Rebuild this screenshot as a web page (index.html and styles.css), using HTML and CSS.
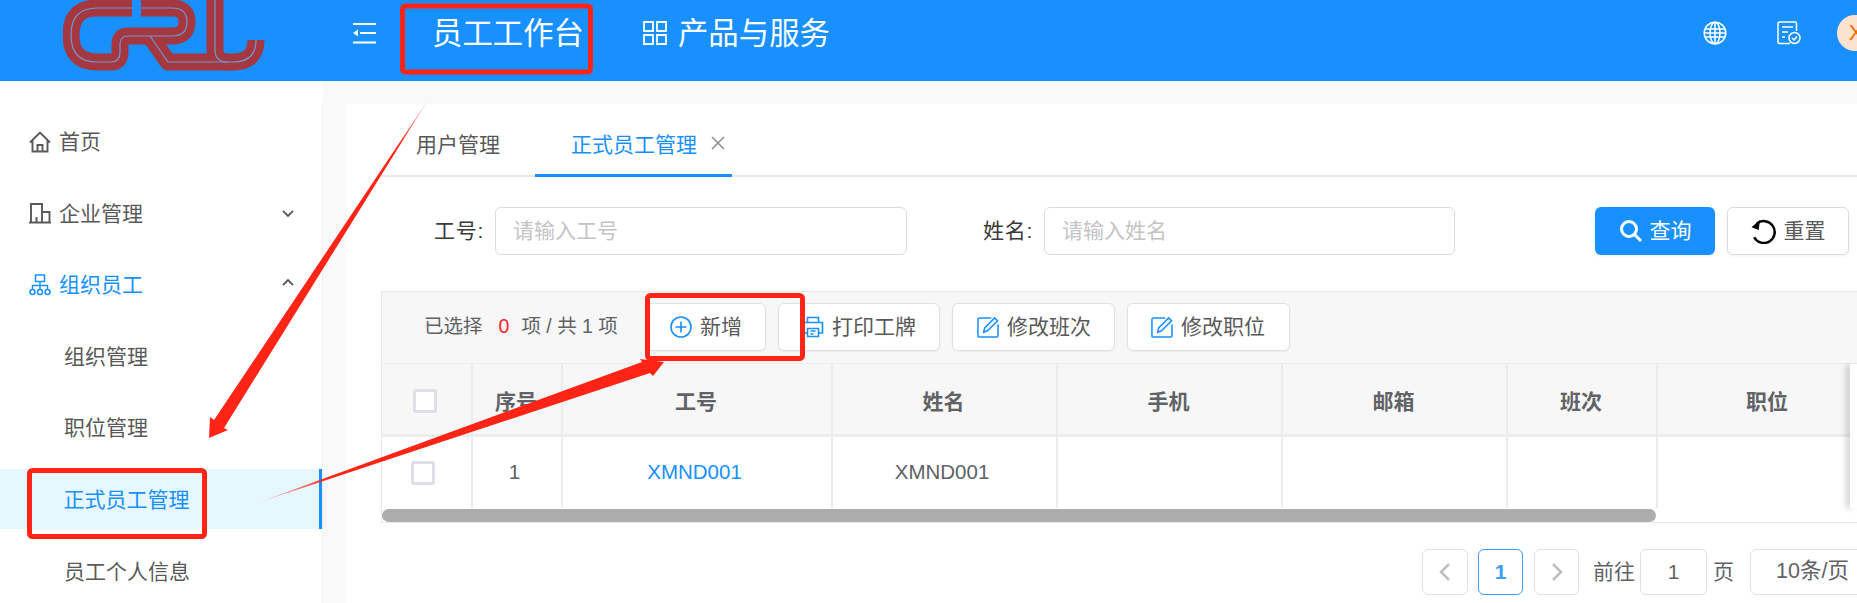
FILE: index.html
```html
<!DOCTYPE html>
<html lang="zh-CN">
<head>
<meta charset="utf-8">
<title>正式员工管理</title>
<link rel="stylesheet" href="styles.css">
</head>
<body>
<header class="topbar">
  <svg class="logo" viewBox="0 0 202 71" aria-hidden="true">
    <g class="logo-band">
      <path d="M69 8H34Q8 8 8 35Q8 62 34 62H48Q57 62 57 52V44Q57 36 65 36H109Q124 36 124 22Q124 8 109 8H78"/>
      <path d="M87 36L105 62H170Q193 62 193 40"/>
      <path d="M152 -4V50Q152 62 165 62"/>
    </g>
    <g class="logo-line">
      <path d="M69 8H34Q8 8 8 35Q8 62 34 62H48Q57 62 57 52V44Q57 36 65 36H109Q124 36 124 22Q124 8 109 8H78"/>
      <path d="M87 36L105 62H170Q193 62 193 40"/>
      <path d="M152 -4V50Q152 62 165 62"/>
    </g>
  </svg>
  <svg class="ico-menu" viewBox="0 0 23 22" aria-hidden="true">
    <path d="M0 1h23v2H0zM7 10h16v2H7zM0 19.500h23v2H0zM0 11l5-3.500v7z"/>
  </svg>
  <span class="top-title">员工工作台</span>
  <svg class="ico-grid" viewBox="0 0 24 24" aria-hidden="true">
    <path d="M1 1h9v9H1zM14 1h9v9h-9zM1 14h9v9H1zM14 14h9v9h-9z"/>
  </svg>
  <span class="top-title top-title-b">产品与服务</span>
  <div class="top-right">
    <svg class="ico-top" viewBox="0 0 24 24" aria-hidden="true">
      <circle cx="12" cy="12" r="10.800"/>
      <ellipse cx="12" cy="12" rx="5" ry="10.800"/>
      <path d="M12 1v22M2 8h20M2 16h20M1 12h22"/>
    </svg>
    <svg class="ico-top" viewBox="0 0 24 24" aria-hidden="true">
      <path d="M13 22.500H2.500Q1 22.500 1 21V2.500Q1 1 2.500 1H18Q19.500 1 19.500 2.500V10"/>
      <path d="M5 6h11M5 11h6M5 16h3"/>
      <circle cx="17.500" cy="17" r="5.500"/>
      <path d="M15 17l2 2 3-3.500"/>
    </svg>
    <div class="avatar">X</div>
  </div>
</header>

<div class="body-row">
  <nav class="sidebar">
    <a class="nav-item">
      <svg class="nav-ico" viewBox="0 0 22 22" aria-hidden="true"><path d="M1 11.500L11 1.500l10 10M3.500 9.500V20.500h15V9.500M8.500 20.500V14h5v6.500"/></svg>
      <span>首页</span>
    </a>
    <a class="nav-item">
      <svg class="nav-ico" viewBox="0 0 22 22" aria-hidden="true"><path d="M0 20.500h22M2 20.500V2h11v18.500M13 10h7.500v10.500M7.500 20.500V15"/></svg>
      <span>企业管理</span>
      <svg class="chev" viewBox="0 0 12 7" aria-hidden="true"><path d="M1 1l5 5 5-5"/></svg>
    </a>
    <a class="nav-item nav-open">
      <svg class="nav-ico" viewBox="0 0 22 22" aria-hidden="true"><path d="M6.500 1h9v6.500h-9zM11 7.500V15M3.500 15v-3.500h15V15"/><circle cx="3.500" cy="18" r="2.500"/><circle cx="11" cy="18" r="2.500"/><circle cx="18.500" cy="18" r="2.500"/></svg>
      <span>组织员工</span>
      <svg class="chev chev-up" viewBox="0 0 12 7" aria-hidden="true"><path d="M1 6l5-5 5 5"/></svg>
    </a>
    <a class="nav-item nav-sub">组织管理</a>
    <a class="nav-item nav-sub">职位管理</a>
    <a class="nav-item nav-sub nav-active">正式员工管理</a>
    <a class="nav-item nav-sub nav-last">员工个人信息</a>
  </nav>

  <main class="stage">
    <section class="card">
      <div class="tabs">
        <div class="tab">用户管理</div>
        <div class="tab tab-active">正式员工管理<svg class="tab-x" viewBox="0 0 14 14" aria-hidden="true"><path d="M1 1l12 12M13 1L1 13"/></svg></div>
      </div>

      <form class="filter">
        <label class="f-label">工号:</label>
        <div class="f-input f-input-a">请输入工号</div>
        <label class="f-label f-label-b">姓名:</label>
        <div class="f-input f-input-b">请输入姓名</div>
        <button type="button" class="btn-primary">
          <svg class="ico-search" viewBox="0 0 24 24" aria-hidden="true"><circle cx="10" cy="10" r="7.500"/><path d="M15.500 15.500L22 22"/></svg>查询
        </button>
        <button type="button" class="btn-reset">
          <svg class="ico-reset" viewBox="0 0 24 24" aria-hidden="true"><path class="reset-arc" d="M5.500 4.500A10.500 10.500 0 1 1 3 17.500"/><path class="reset-head" d="M8.500 1L7.500 10.500 0.500 8z"/></svg>重置
        </button>
      </form>

      <div class="toolbar">
        <span class="tb-count">已选择<b class="tb-zero">0</b>项 / 共 1 项</span>
        <button type="button" class="tb-btn tb-add">
          <svg class="tb-ico" viewBox="0 0 22 22" aria-hidden="true"><circle cx="11" cy="11" r="10"/><path d="M11 5.500v11M5.500 11h11"/></svg>新增
        </button>
        <button type="button" class="tb-btn tb-print">
          <svg class="tb-ico" viewBox="0 0 22 22" aria-hidden="true"><path d="M5.500 6.500V1.500h11v5M5.500 17H1.500V6.500h19V17h-4"/><path d="M5.500 12.500h11v8h-11zM8.500 15h5M8.500 18h3"/></svg>打印工牌
        </button>
        <button type="button" class="tb-btn tb-edit-a">
          <svg class="tb-ico" viewBox="0 0 23 23" aria-hidden="true"><path d="M15 2H2.500Q1 2 1 3.500v18Q1 22 2.500 22h18q1.500 0 1.500-1.500V9"/><path d="M7 17l1-4.500L18.500 2l3 3L11 15.500z"/></svg>修改班次
        </button>
        <button type="button" class="tb-btn tb-edit-b">
          <svg class="tb-ico" viewBox="0 0 23 23" aria-hidden="true"><path d="M15 2H2.500Q1 2 1 3.500v18Q1 22 2.500 22h18q1.500 0 1.500-1.500V9"/><path d="M7 17l1-4.500L18.500 2l3 3L11 15.500z"/></svg>修改职位
        </button>
      </div>

      <div class="table-wrap">
        <table class="grid">
          <colgroup>
            <col class="c-check"><col class="c-no"><col class="c-id"><col class="c-m"><col class="c-m"><col class="c-m"><col class="c-shift"><col class="c-pos">
          </colgroup>
          <thead>
            <tr>
              <th><span class="check check-head"></span></th>
              <th>序号</th><th>工号</th><th>姓名</th><th>手机</th><th>邮箱</th><th>班次</th><th>职位</th>
            </tr>
          </thead>
          <tbody>
            <tr>
              <td><span class="check check-row"></span></td>
              <td>1</td><td class="cell-link">XMND001</td><td>XMND001</td><td></td><td></td><td></td><td></td>
            </tr>
          </tbody>
        </table>
        <div class="scroll-track"><div class="scroll-thumb"></div></div>
        <div class="fixed-edge"></div>
      </div>

      <div class="pager">
        <span class="pg-box pg-prev"><svg class="pg-chev" viewBox="0 0 12 20" aria-hidden="true"><path d="M10 2L2 10l8 8"/></svg></span>
        <span class="pg-box pg-cur">1</span>
        <span class="pg-box pg-next"><svg class="pg-chev" viewBox="0 0 12 20" aria-hidden="true"><path d="M2 2l8 8-8 8"/></svg></span>
        <span class="pg-text pg-goto">前往</span>
        <span class="pg-box pg-input">1</span>
        <span class="pg-text pg-unit">页</span>
        <span class="pg-box pg-size">10条/页</span>
      </div>
    </section>
  </main>
</div>

<svg class="annot" viewBox="0 0 1857 603" aria-hidden="true">
  <defs>
    <linearGradient id="fade-a" gradientUnits="userSpaceOnUse" x1="428" y1="100" x2="400" y2="144">
      <stop offset="0" stop-color="#ff2416" stop-opacity=".3"/>
      <stop offset="1" stop-color="#ff2416"/>
    </linearGradient>
    <linearGradient id="fade-b" gradientUnits="userSpaceOnUse" x1="257" y1="503" x2="330" y2="478">
      <stop offset="0" stop-color="#ff2416" stop-opacity=".1"/>
      <stop offset="1" stop-color="#ff2416"/>
    </linearGradient>
  </defs>
  <rect class="mark" x="402.500" y="6" width="188" height="66" rx="3"/>
  <rect class="mark" x="647.500" y="295.500" width="155" height="63" rx="3"/>
  <rect class="mark" x="29.500" y="470.500" width="175" height="66" rx="3"/>
  <polygon fill="url(#fade-a)" points="428,100 224,428 228,430 209,438 210,417 214,420"/>
  <polygon fill="url(#fade-b)" points="257,503 650,373 653,376 664,362 640,359 642,362"/>
</svg>
</body>
</html>
```
FILE: styles.css
```css
* { box-sizing: border-box; }
html, body { margin: 0; height: 100%; overflow: hidden; }
body {
  position: relative;
  width: 1857px;
  height: 603px;
  background: #fff;
  color: #595959;
  font-family: "Liberation Sans", "Noto Sans CJK SC", sans-serif;
  font-size: 21px;
  line-height: 1.2;
}
button { font: inherit; margin: 0; cursor: pointer; }

/* top bar */
.topbar {
  height: 81px;
  padding-bottom: 15px;
  background: #1890ff;
  color: #fff;
  display: flex;
  align-items: center;
}
.logo { width: 202px; height: 71px; margin-left: 63px; align-self: flex-start; flex: none; }
.logo-band path { fill: none; stroke: #a4373f; stroke-width: 17; stroke-linejoin: round; }
.logo-line path { fill: none; stroke: #6f9bd0; stroke-width: 1.200; stroke-linejoin: round; }
.ico-menu { width: 23px; height: 22px; margin-left: 88px; fill: #fff; flex: none; }
.top-title { font-size: 30.400px; margin-left: 56px; line-height: 40px; white-space: nowrap; }
.top-title-b { margin-left: 11px; }
.ico-grid { width: 24px; height: 24px; margin-left: 59px; fill: none; stroke: #fff; stroke-width: 1.800; flex: none; }
.top-right { margin-left: auto; display: flex; align-items: center; gap: 50px; margin-right: -16px; }
.ico-top { width: 24px; height: 24px; fill: none; stroke: #fff; stroke-width: 1.500; flex: none; }
.avatar {
  width: 36px; height: 36px; border-radius: 50%;
  background: #fde3cf; color: #f56a00;
  display: flex; align-items: center; justify-content: center;
  font-size: 22px; margin-left: -14px; padding-left: 2px;
}

/* layout below the bar */
.body-row { display: flex; height: 522px; }
.sidebar {
  width: 323px; flex: none;
  padding-top: 30px;
  background: #fff;
  border-right: 1px solid #efefef;
  border-image: linear-gradient(to bottom, #fff 23px, #efefef 23px) 1;
  overflow: hidden;
}
.nav-item {
  height: 60px;
  margin-bottom: 11.600px;
  padding: 1px 28px 0 29px;
  display: flex;
  align-items: center;
  white-space: nowrap;
}
.nav-ico { width: 22px; height: 22px; margin-right: 8px; fill: none; stroke: #595959; stroke-width: 1.900; flex: none; }
.chev { width: 12px; height: 7px; margin-left: auto; fill: none; stroke: #595959; stroke-width: 1.800; }
.chev-up { margin-top: -4px; }
.nav-open { color: #1890ff; }
.nav-open .nav-ico { stroke: #1890ff; stroke-width: 1.500; fill: none; }
.nav-sub { padding-left: 64px; }
.nav-active { color: #1890ff; background: #e6f7ff; box-shadow: inset -3px 0 0 #1890ff; padding: 2px 28px 0 63.500px; }
.nav-last { padding-top: 2px; }

.stage { flex: 1; min-width: 0; background: #f9f9f9; padding: 23px 0 0 23px; }
.card { height: 100%; background: #fff; padding: 0 0 0 35px; overflow: hidden; }

/* tabs */
.tabs { height: 73px; display: flex; border-bottom: 2px solid #e8e8e8; }
.tab {
  padding: 27px 36px 0 35px; height: 73px; line-height: 28px; white-space: nowrap; color: #595959;
}
.tab-active { color: #1890ff; border-bottom: 3px solid #1890ff; display: flex; align-items: flex-start; padding: 27px 7px 0 36px; margin-left: -1px; }
.tab-x { width: 14px; height: 14px; margin: 5px 0 0 14px; fill: none; stroke: #8c8c8c; stroke-width: 1.500; }

/* filter */
.filter { display: flex; align-items: center; margin-top: 30px; height: 48px; }
.f-label { margin-left: 53px; width: 48px; color: #3a3a3a; white-space: nowrap; letter-spacing: .7px; }
.f-label-b { margin-left: 76px; width: 50px; }
.f-input {
  height: 48px; border: 1.500px solid #dcdcdc; border-radius: 6px;
  padding-left: 17px; line-height: 45px; color: #c4c4c4; margin-left: 13px; flex: none;
}
.f-input-a { width: 412px; }
.f-input-b { width: 411px; margin-left: 11px; }
.btn-primary, .btn-reset {
  height: 48px; border-radius: 6px; display: flex; align-items: center; justify-content: center; padding: 0; flex: none;
}
.btn-primary {
  width: 120px; margin-left: 140px; background: #1890ff; color: #fff; border: 0;
  box-shadow: 0 2px 2px rgba(0,0,0,.05);
}
.btn-reset {
  width: 122px; margin-left: 12px; background: #fff; color: #595959; border: 1.500px solid #d9d9d9;
  box-shadow: 0 2px 2px rgba(0,0,0,.03);
}
.ico-search { width: 24px; height: 24px; margin-right: 7px; fill: none; stroke: #fff; stroke-width: 3; }
.ico-reset { width: 25px; height: 25px; margin-right: 8px; }
.reset-arc { fill: none; stroke: #000; stroke-width: 2.400; }
.reset-head { fill: #000; }

/* toolbar */
.toolbar {
  height: 72px; margin-top: 36px;
  background: #f7f7f7;
  border-top: 1px solid #e8e8e8;
  border-left: 1px solid #e8e8e8;
  display: flex; align-items: center;
  padding-bottom: 2px;
}
.tb-count { font-size: 19.500px; margin-left: 42px; width: 222px; flex: none; white-space: nowrap; color: #606266; }
.tb-zero { font-weight: 400; color: #f5222d; margin: 0 12px 0 16px; }
.tb-btn {
  height: 48px; background: #fff; color: #595959;
  border: 1.500px solid #e0e0e0; border-radius: 6px;
  display: flex; align-items: center; padding: 0; white-space: nowrap;
  box-shadow: 0 1px 2px rgba(0,0,0,.05);
  margin-right: 12px; flex: none;
}
.tb-add { width: 120px; padding-left: 23px; margin-right: 12px; }
.tb-print { width: 162px; padding-left: 23px; }
.tb-edit-a { width: 163px; padding-left: 24px; }
.tb-edit-b { width: 163px; padding-left: 23px; }
.tb-ico { width: 22px; height: 22px; margin-right: 8px; fill: none; stroke: #1890ff; stroke-width: 1.600; flex: none; }

/* table */
.table-wrap { position: relative; height: 160px; overflow: hidden; border-left: 1px solid #e8e8e8; border-bottom: 1.500px solid #e8e8e8; }
.grid { border-collapse: separate; border-spacing: 0; table-layout: fixed; width: 1498px; }
.c-check { width: 91px; }
.c-no { width: 90px; }
.c-id { width: 270px; }
.c-m { width: 225px; }
.c-shift { width: 150px; }
.c-pos { width: 222px; }
.grid th {
  height: 74px; background: #f7f7f7; color: #606266; font-weight: 700; text-align: center; padding: 5px 2px 0 0;
  border-right: 2px solid #ececec; border-top: 1px solid #ececec; border-bottom: 3px solid #ececec;
}
.grid td {
  height: 71px; text-align: center; padding: 0 5px 0 0; color: #606266; font-size: 20.500px;
  border-right: 2px solid #ececec;
}
.grid .cell-link { color: #1890ff; }
.check { display: block; width: 24px; height: 24px; background: #fff; border: 3px solid #dde0e6; border-radius: 3px; }
.check-head { margin-left: 31px; margin-top: -2px; }
.check-row { margin-left: 29px; }
.scroll-track { height: 14px; padding-top: 1px; }
.scroll-thumb { width: 1274px; height: 13px; background: #adadad; border-radius: 7px; }
.fixed-edge {
  position: absolute; top: 1px; bottom: 14px; right: 0; width: 7px; background: #fff;
  box-shadow: -4px 0 6px rgba(0,0,0,.18);
}

/* pager */
.pager { display: flex; align-items: center; height: 46px; margin-top: 26px; padding-left: 1041px; }
.pg-box {
  height: 46px; border: 1.500px solid #e0e0e8; border-radius: 6px;
  display: flex; align-items: center; justify-content: center; flex: none; color: #606266;
}
.pg-prev { width: 46px; }
.pg-cur { width: 45px; margin-left: 10px; border-color: #409eff; color: #409eff; font-weight: 700; }
.pg-next { width: 45px; margin-left: 11px; }
.pg-chev { width: 12px; height: 20px; fill: none; stroke: #bfbfbf; stroke-width: 2.500; }
.pg-text { color: #606266; white-space: nowrap; flex: none; }
.pg-goto { margin-left: 14px; width: 47px; }
.pg-input { width: 67px; }
.pg-unit { margin-left: 6px; width: 37px; }
.pg-size { width: 140px; padding-right: 40px; justify-content: flex-end; font-size: 21.500px; }

/* review marks painted on the screenshot */
.annot { position: absolute; left: 0; top: 0; width: 1857px; height: 603px; pointer-events: none; }
.mark { fill: none; stroke: #ff2416; stroke-width: 5; }
```
